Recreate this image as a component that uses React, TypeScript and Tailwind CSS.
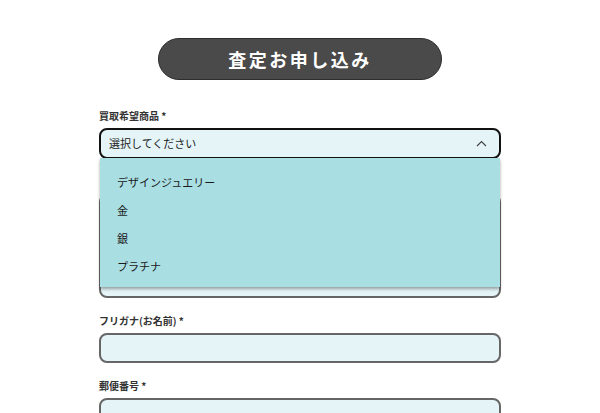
import { useState } from 'react'

const font = { fontFamily: '"Noto Sans CJK JP", "Noto Sans", sans-serif' }

const options = ['デザインジュエリー', '金', '銀', 'プラチナ']

function Label({ text }: { text: string }) {
  return (
    <label className="block h-[14px] text-[10px] font-bold leading-[14px] text-[#333]">
      {text} *
    </label>
  )
}

export default function App() {
  const [open, setOpen] = useState(true)

  return (
    <div className="min-h-screen bg-white" style={font}>
      <div className="mx-auto w-[402px] pt-[38px]">
        <div className="flex justify-center">
          <h2 className="flex h-[42px] w-[284px] items-center justify-center rounded-full border border-[#2e2e2e] bg-[#4a4a4a] text-[18px] font-bold tracking-[0.14em] text-white">
            査定お申し込み
          </h2>
        </div>

        {/* 買取希望商品 */}
        <div className="mt-[29px]">
          <Label text="買取希望商品" />
          <div className="relative z-10 mt-[5px]">
            <button
              type="button"
              onClick={() => setOpen(!open)}
              className="flex h-[31px] w-full items-center justify-between rounded-[8px] border-2 border-[#111] bg-[#e4f4f7] pl-[8px] pr-[12px] text-[11px] text-[#222]"
            >
              <span>選択してください</span>
              <svg width="11" height="7" viewBox="0 0 11 7" fill="none">
                <path d="M1 6 L5.5 1.5 L10 6" stroke="#444" strokeWidth="1.2" />
              </svg>
            </button>
            {open && (
              <ul className="absolute left-[1px] right-[1px] top-[30px] bg-[#a9dee3] pb-[7px] pt-[10px] shadow-[0_2px_3px_rgba(0,0,0,0.35)]">
                {options.map((o) => (
                  <li key={o} className="h-[28px] pl-[17px] text-[11px] leading-[28px] text-[#1a1a1a]">
                    {o}
                  </li>
                ))}
              </ul>
            )}
          </div>
        </div>

        {/* field hidden behind the open list */}
        <div className="mt-[16px]">
          <div className="h-[14px]" />
          <div className="mt-[5px] h-[104px] rounded-[8px] border-2 border-[#666] bg-[#e4f4f7]" />
        </div>

        <div className="mt-[16px]">
          <Label text="フリガナ(お名前)" />
          <input className="mt-[5px] block h-[30px] w-full rounded-[8px] border-2 border-[#666] bg-[#e4f4f7] outline-none" />
        </div>

        <div className="mt-[16px]">
          <Label text="郵便番号" />
          <input className="mt-[5px] block h-[30px] w-full rounded-[8px] border-2 border-[#666] bg-[#e4f4f7] outline-none" />
        </div>
      </div>
    </div>
  )
}
